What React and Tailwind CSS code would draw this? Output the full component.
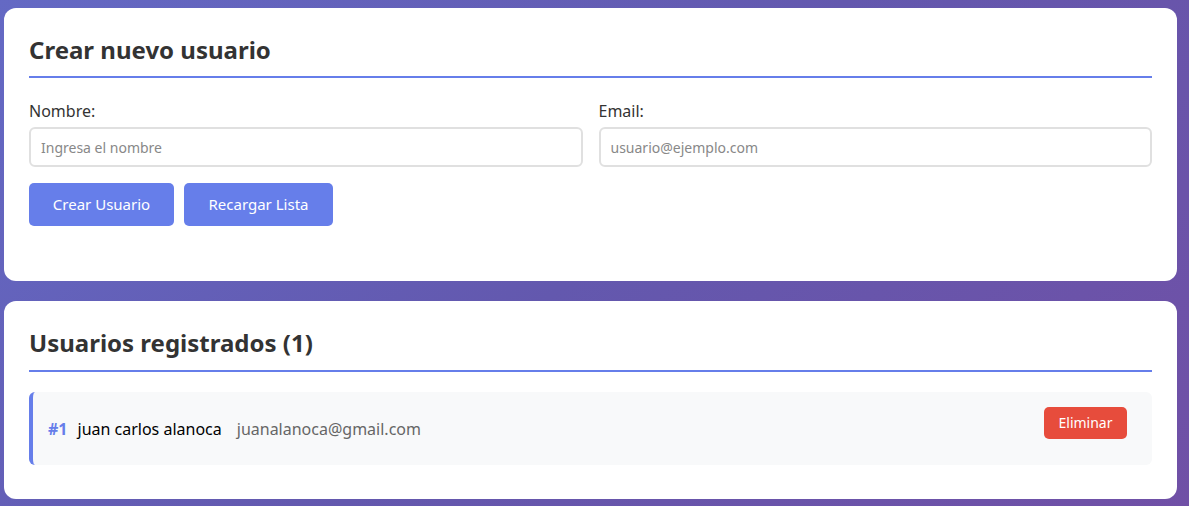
export default function App() {
  return (
    <div className="min-h-[506px] w-full bg-[linear-gradient(135deg,#6469c4_0%,#6358ae_50%,#7050a6_100%)] pt-[8px] pb-[7px] pl-[4px] pr-[12px] font-['Noto_Sans',sans-serif]">
      <div className="flex flex-col gap-[20px]">
        <div className="rounded-[12px] bg-white px-[25px] pt-[23px] pb-[55px]">
          <h2 className="border-b-2 border-[#667eea] pb-[8px] text-[24px] font-bold leading-[37px] text-[#333]">
            Crear nuevo usuario
          </h2>
          <div className="mt-[22px] grid grid-cols-2 gap-[16px]">
            <div className="flex flex-col">
              <label className="text-[16px] leading-[22px] text-[#333]">Nombre:</label>
              <input
                className="mt-[5px] h-[40px] rounded-[6px] border-2 border-[#e0e0e0] px-[10px] text-[14px] text-[#333] placeholder:text-[#888] outline-none"
                placeholder="Ingresa el nombre"
              />
            </div>
            <div className="flex flex-col">
              <label className="text-[16px] leading-[22px] text-[#333]">Email:</label>
              <input
                className="mt-[5px] h-[40px] rounded-[6px] border-2 border-[#e0e0e0] px-[10px] text-[14px] text-[#333] placeholder:text-[#888] outline-none"
                placeholder="usuario@ejemplo.com"
              />
            </div>
          </div>
          <div className="mt-[16px] flex gap-[10px]">
            <button className="h-[43px] w-[145px] rounded-[5px] bg-[#667eea] text-[15px] text-white">
              Crear Usuario
            </button>
            <button className="h-[43px] w-[149px] rounded-[5px] bg-[#667eea] text-[15px] text-white">
              Recargar Lista
            </button>
          </div>
        </div>
        <div className="rounded-[12px] bg-white px-[25px] pt-[23px] pb-[34px]">
          <h2 className="border-b-2 border-[#667eea] pb-[9px] text-[24px] font-bold leading-[37px] text-[#333]">
            Usuarios registrados (1)
          </h2>
          <div className="mt-[20px] flex h-[73px] items-center justify-between rounded-[6px] border-l-4 border-[#667eea] bg-[#f8f9fa] pl-[15px] pr-[25px]">
            <div className="flex items-baseline text-[16px]">
              <span className="font-bold text-[#667eea]">#1</span>
              <span className="ml-[10px] text-black">juan carlos alanoca</span>
              <span className="ml-[15px] text-[#666]">juanalanoca@gmail.com</span>
            </div>
            <button className="mb-[12px] h-[32px] w-[83px] rounded-[5px] bg-[#e74c3c] text-[14px] text-white">
              Eliminar
            </button>
          </div>
        </div>
      </div>
    </div>
  );
}
